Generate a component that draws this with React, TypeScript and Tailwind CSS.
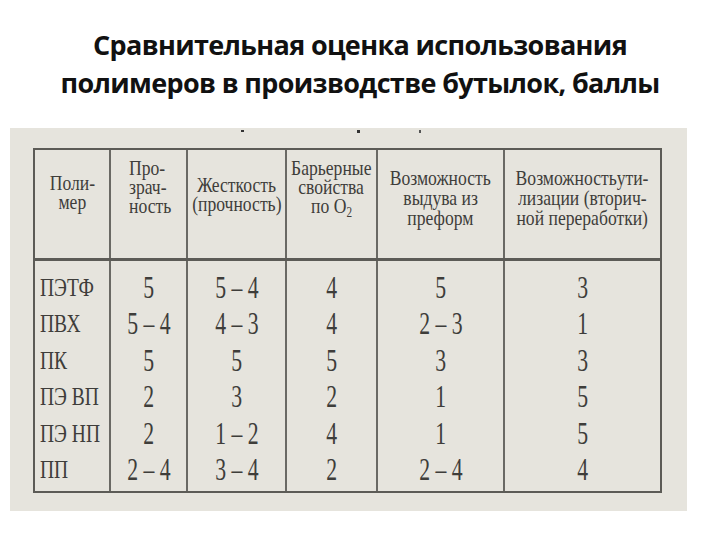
import React from 'react';

type HeadCell = { lines: React.ReactNode[]; pad: string; left?: boolean; leading: string };

const heads: HeadCell[] = [
  { lines: ['Поли-', 'мер'], pad: 'pt-[23px]', leading: 'leading-[19px]' },
  { lines: ['Про-', 'зрач-', 'ность'], pad: 'pt-[8px] pl-[18px]', left: true, leading: 'leading-[19px]' },
  { lines: ['Жесткость', '(прочность)'], pad: 'pt-[25px]', leading: 'leading-[19px]' },
  {
    lines: [
      'Барьерные',
      'свойства',
      <>
        по O<span className="text-[14px] relative top-[4px]">2</span>
      </>,
    ],
    pad: 'pt-[8px]',
    leading: 'leading-[19px]',
  },
  { lines: ['Возможность', 'выдува из', 'преформ'], pad: 'pt-[18px]', leading: 'leading-[20px]' },
  { lines: ['Возможностьути-', 'лизации (вторич-', 'ной переработки)'], pad: 'pt-[18px]', leading: 'leading-[20px]' },
];

const rows = [
  ['ПЭТФ', '5', '5 – 4', '4', '5', '3'],
  ['ПВХ', '5 – 4', '4 – 3', '4', '2 – 3', '1'],
  ['ПК', '5', '5', '5', '3', '3'],
  ['ПЭ ВП', '2', '3', '2', '1', '5'],
  ['ПЭ НП', '2', '1 – 2', '4', '1', '5'],
  ['ПП', '2 – 4', '3 – 4', '2', '2 – 4', '4'],
];

const cols = 'grid grid-cols-[74px_77px_99px_91px_127px_157px]';

const App: React.FC = () => {
  return (
    <div className="w-[720px] h-[540px] bg-white overflow-hidden">
      {/* Title */}
      <div className="h-[128px] pt-[26px] text-center font-['Open_Sans',sans-serif] font-bold text-[27px] leading-[38px] text-[#111] tracking-[-0.65px]">
        <p>Сравнительная оценка использования</p>
        <p>полимеров в производстве бутылок, баллы</p>
      </div>

      {/* Scanned table */}
      <div className="ml-[10px] w-[677px] h-[383px] bg-[#e6e4dd] font-['Liberation_Serif',serif] text-[#3e3d3a]">
        {/* specks left over from the scan */}
        <div className="flex items-start h-[20px] pt-[2px]">
          <span className="ml-[231px] w-[3px] h-[2px] bg-[#333]" />
          <span className="ml-[113px] w-[3px] h-[3px] bg-[#333]" />
          <span className="ml-[59px] w-[2px] h-[3px] bg-[#555]" />
        </div>

        <div className="ml-[23px] w-[629px] border-2 border-[#5c5b56]">
          {/* Header */}
          <div className={`${cols} h-[111px] border-b-[3px] border-[#5c5b56]`}>
            {heads.map((h, i) => (
              <div
                key={i}
                className={`flex flex-col ${h.left ? 'items-start' : 'items-center'} ${h.pad} ${h.leading} text-[22px] ${
                  i > 0 ? 'border-l-2 border-[#6a6964]' : ''
                }`}
              >
                {h.lines.map((l, j) => (
                  <span
                    key={j}
                    className={`inline-block whitespace-nowrap scale-x-[0.8] ${h.left ? 'origin-left' : ''}`}
                  >
                    {l}
                  </span>
                ))}
              </div>
            ))}
          </div>

          {/* Body */}
          <div className={`${cols} h-[230px]`}>
            {heads.map((_, c) => (
              <div
                key={c}
                className={`flex flex-col pt-[9px] ${c === 0 ? 'items-start pl-[5px]' : 'items-center'} ${
                  c > 0 ? 'border-l-2 border-[#6a6964]' : ''
                }`}
              >
                {rows.map((r, j) => (
                  <span
                    key={j}
                    className={`inline-block h-[36.4px] leading-[36.4px] whitespace-nowrap ${
                      c === 0 ? 'text-[26px] scale-x-[0.75] origin-left' : 'text-[31px] scale-x-[0.7]'
                    }`}
                  >
                    {r[c]}
                  </span>
                ))}
              </div>
            ))}
          </div>
        </div>
      </div>
    </div>
  );
};

export default App;
